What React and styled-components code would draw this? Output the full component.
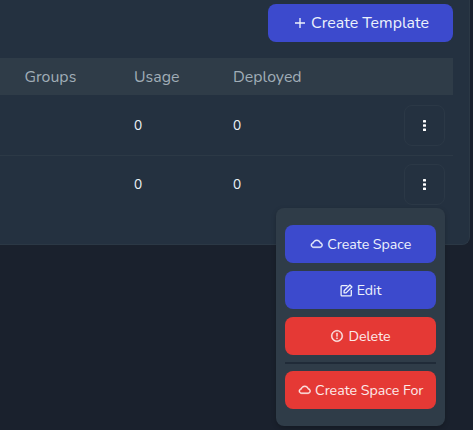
import React from "react";
import styled, { createGlobalStyle } from "styled-components";
import { AiOutlineCloud } from "react-icons/ai";
import { RiErrorWarningLine } from "react-icons/ri";

const GlobalStyle = createGlobalStyle`
  * { box-sizing: border-box; }
  body {
    margin: 0;
    overflow: hidden;
    background: #1a212d;
    font-family: Nunito, "Open Sans", "Noto Sans", sans-serif;
  }
`;

const Page = styled.main`
  height: 430px;
  padding-right: 3px;
  overflow: hidden;
`;

const Panel = styled.section`
  height: 245px;
  padding: 4px 16px 0 0;
  background: #243140;
  border: solid #2b3845;
  border-width: 0 1px 1px 0;
  border-radius: 0 0 8px 0;
`;

const Toolbar = styled.header`
  display: flex;
  justify-content: flex-end;
  height: 54px;
`;

const Button = styled.button`
  display: flex;
  align-items: center;
  justify-content: center;
  gap: ${(p) => p.$gap ?? 4}px;
  width: ${(p) => p.$width ?? "100%"};
  height: 38px;
  padding: 0;
  border: 0;
  border-radius: 8px;
  background: ${(p) => (p.$danger ? "#e53935" : "#3c4acd")};
  color: ${(p) => (p.$danger ? "#fcebea" : "#edf2fc")};
  font-family: inherit;
  font-size: ${(p) => p.$size ?? 14.2}px;
  white-space: nowrap;
  svg { flex: none; }
`;

const TableRow = styled.div`
  display: grid;
  grid-template-columns: 109.5px 99px 1fr 49px;
  align-items: center;
  height: 59px;
  padding-left: 24.5px;
  color: #eef3f7;
  font-size: 13.6px;
  & + & { border-top: 1px solid #2c3946; }
`;

const TableHead = styled(TableRow)`
  height: 37px;
  margin-bottom: 1px;
  background: #2f3c48;
  color: #a0adb7;
  font-size: 15.9px;
  & + ${TableRow} { border-top: 0; }
`;

const Kebab = styled.button`
  display: grid;
  place-items: center;
  width: 41px;
  height: 41px;
  margin-top: -1px;
  padding: 0;
  border: 1px solid #2b3846;
  border-radius: 8px;
  background: transparent;
  color: #fff;
`;

const Count = styled.span`
  margin-top: -1px;
`;

const Menu = styled.nav`
  position: absolute;
  top: 208px;
  left: 276px;
  display: flex;
  flex-direction: column;
  gap: 8px;
  width: 169px;
  height: 218px;
  padding: 17px 9px;
  border-radius: 8px;
  background: #2f3c48;
  box-shadow: 0 2px 5px rgba(0, 0, 0, 0.22);
`;

const Divider = styled.hr`
  flex: none;
  width: 100%;
  height: 2px;
  margin: -1px 0 -1px;
  border: 0;
  background: #202b38;
`;

const CloudIcon = styled(AiOutlineCloud).attrs({ size: 13.5 })`
  stroke: currentColor;
  stroke-width: 35;
`;

function PlusIcon() {
  return (
    <svg width="14" height="14" viewBox="0 0 14 14" fill="none" stroke="currentColor" strokeWidth="1.35">
      <path d="M8 2v10M3 7h10" />
    </svg>
  );
}

function EditIcon() {
  return (
    <svg width="13" height="13" viewBox="0 0 13 13" fill="none" stroke="currentColor" strokeWidth="1.3" strokeLinejoin="round">
      <path d="M7.5 1.7H2a.9.9 0 0 0-.9.9v8.3a.9.9 0 0 0 .9.9h8.4a.9.9 0 0 0 .9-.9V6" />
      <path d="M4.1 8.9V6.8L9.9 1l2 2-5.8 5.9z" />
    </svg>
  );
}

function Dots() {
  return (
    <svg width="5" height="13" viewBox="0 0 5 13" fill="currentColor">
      <rect x="1" y="1" width="3" height="2.6" rx=".6" />
      <rect x="1" y="5.2" width="3" height="2.6" rx=".6" />
      <rect x="1" y="9.4" width="3" height="2.6" rx=".6" />
    </svg>
  );
}

function Row({ usage, deployed }) {
  return (
    <TableRow>
      <span />
      <Count>{usage}</Count>
      <Count>{deployed}</Count>
      <Kebab aria-label="Actions"><Dots /></Kebab>
    </TableRow>
  );
}

export default function App() {
  return (
    <Page>
      <GlobalStyle />
      <Panel>
        <Toolbar>
          <Button $width="185px" $size={15.9} $gap={5}>
            <PlusIcon />
            <span>Create Template</span>
          </Button>
        </Toolbar>
        <TableHead>
          <span>Groups</span>
          <span>Usage</span>
          <span>Deployed</span>
        </TableHead>
        <Row usage={0} deployed={0} />
        <Row usage={0} deployed={0} />
      </Panel>
      <Menu>
        <Button><CloudIcon /><span>Create Space</span></Button>
        <Button><EditIcon /><span>Edit</span></Button>
        <Button $danger><RiErrorWarningLine size={14} strokeWidth={0.5} /><span>Delete</span></Button>
        <Divider />
        <Button $danger><CloudIcon /><span>Create Space For</span></Button>
      </Menu>
    </Page>
  );
}
